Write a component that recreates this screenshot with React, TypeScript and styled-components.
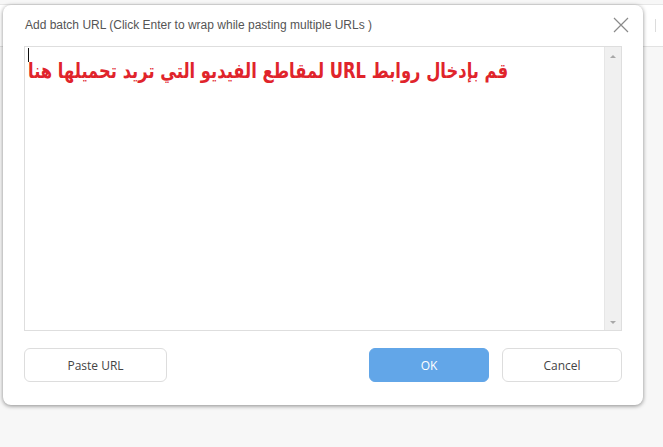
import styled, { createGlobalStyle } from "styled-components";

const GlobalStyle = createGlobalStyle`
  html, body {
    margin: 0;
    padding: 0;
    background: #f7f7f7;
    font-family: "Liberation Sans", Arial, sans-serif;
  }
`;

const Page = styled.div`
  position: relative;
  width: 663px;
  height: 447px;
  overflow: hidden;
  background: #f7f7f7;
`;

const TopBar = styled.div`
  display: flex;
  align-items: center;
  justify-content: space-between;
  margin-top: 4px;
  height: 41px;
  background: #ffffff;
  border-top: 1px solid #e6e6e6;
  border-bottom: 1px solid #e2e2e2;
`;

const BarLabel = styled.span`
  margin-left: -4px;
  padding-top: 10px;
  font-size: 13px;
  color: #555;
`;

const BarDivider = styled.span`
  width: 1px;
  height: 13px;
  margin-right: 7px;
  background: #dcdcdc;
`;

const Dialog = styled.div`
  position: absolute;
  left: 3px;
  top: 5px;
  width: 640px;
  height: 400px;
  box-sizing: border-box;
  padding: 0 21px 23px;
  display: flex;
  flex-direction: column;
  background: #ffffff;
  border-radius: 8px;
  box-shadow: 0 1px 4px rgba(0, 0, 0, 0.45);
`;

const Header = styled.div`
  display: flex;
  align-items: center;
  justify-content: space-between;
  height: 41px;
`;

const Title = styled.span`
  margin-left: 1px;
  font-size: 12px;
  color: #555;
`;

const CloseButton = styled.button`
  display: flex;
  padding: 0;
  margin-right: -8px;
  border: none;
  background: none;
  cursor: pointer;
`;

const TextBox = styled.div`
  display: flex;
  height: 287px;
  border: 1px solid #dedede;
  box-sizing: border-box;
`;

const TextContent = styled.div`
  flex: 1;
  padding: 1px 3px;
  display: flex;
  flex-direction: column;
  align-items: flex-start;
`;

const Caret = styled.span`
  width: 1px;
  height: 14px;
  background: #111;
`;

const Hint = styled.div`
  margin-top: -6px;
  font-family: "DejaVu Sans", sans-serif;
  font-weight: bold;
  font-size: 19px;
  line-height: 28px;
  color: #e0242b;
  transform: scaleX(0.86) scaleY(1.1);
  transform-origin: left center;
`;

const ScrollBar = styled.div`
  width: 16px;
  display: flex;
  flex-direction: column;
  justify-content: space-between;
  align-items: center;
  padding: 8px 0 6px;
  background: #f0f0f0;
  border-left: 1px solid #e6e6e6;
`;

const Arrow = styled.span<{ $down?: boolean }>`
  width: 0;
  height: 0;
  border-left: 3px solid transparent;
  border-right: 3px solid transparent;
  ${p =>
    p.$down
      ? "border-top: 3px solid #a8a8a8;"
      : "border-bottom: 3px solid #a8a8a8;"}
`;

const Footer = styled.div`
  display: flex;
  align-items: center;
  gap: 13px;
  margin-top: 17px;
`;

const Button = styled.button<{ $primary?: boolean; $w: number }>`
  width: ${p => p.$w}px;
  height: 34px;
  box-sizing: border-box;
  border-radius: 6px;
  border: 1px solid ${p => (p.$primary ? "#62a6e8" : "#dddddd")};
  background: ${p => (p.$primary ? "#62a6e8" : "#ffffff")};
  color: ${p => (p.$primary ? "#ffffff" : "#444444")};
  font-family: "Open Sans", sans-serif;
  font-size: 12px;
  cursor: pointer;
`;

const Spacer = styled.div`
  flex: 1;
`;

export default function App() {
  return (
    <Page>
      <GlobalStyle />
      <TopBar>
        <BarLabel>t</BarLabel>
        <BarDivider />
      </TopBar>
      <Dialog>
        <Header>
          <Title>Add batch URL (Click Enter to wrap while pasting multiple URLs )</Title>
          <CloseButton aria-label="Close">
            <svg width="18" height="18" viewBox="0 0 18 18">
              <path d="M2 2 L16 16 M16 2 L2 16" stroke="#8a8a8a" strokeWidth="1.2" fill="none" />
            </svg>
          </CloseButton>
        </Header>
        <TextBox>
          <TextContent>
            <Caret />
            <Hint dir="rtl">قم بإدخال روابط URL لمقاطع الفيديو التي تريد تحميلها هنا</Hint>
          </TextContent>
          <ScrollBar>
            <Arrow />
            <Arrow $down />
          </ScrollBar>
        </TextBox>
        <Footer>
          <Button $w={143}>Paste URL</Button>
          <Spacer />
          <Button $primary $w={120}>OK</Button>
          <Button $w={120}>Cancel</Button>
        </Footer>
      </Dialog>
    </Page>
  );
}
